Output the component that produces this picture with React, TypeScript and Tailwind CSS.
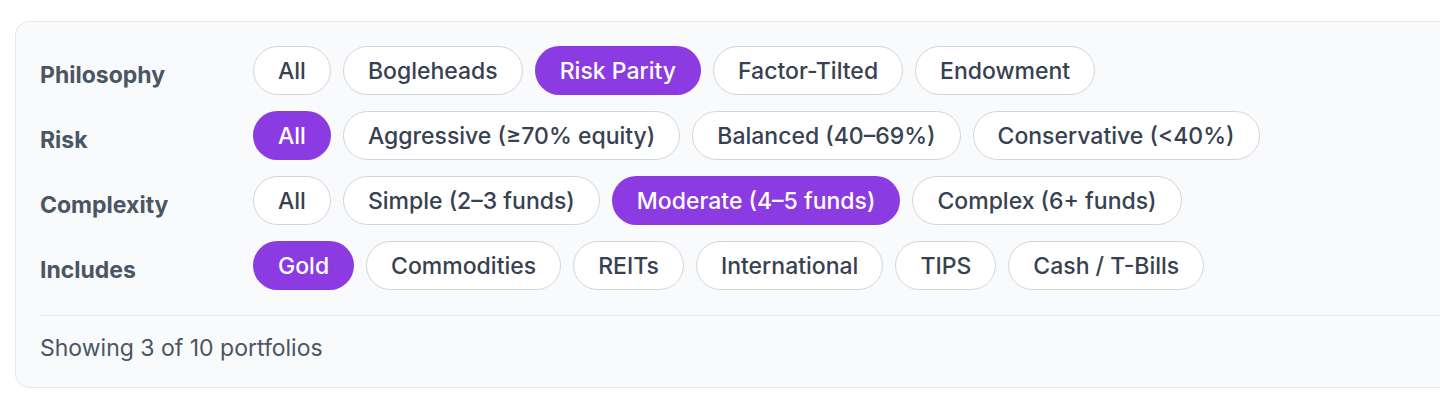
import { useState } from "react";

type Group = {
  key: string;
  label: string;
  options: string[];
};

const GROUPS: Group[] = [
  {
    key: "philosophy",
    label: "Philosophy",
    options: ["All", "Bogleheads", "Risk Parity", "Factor-Tilted", "Endowment"],
  },
  {
    key: "risk",
    label: "Risk",
    options: ["All", "Aggressive (≥70% equity)", "Balanced (40–69%)", "Conservative (<40%)"],
  },
  {
    key: "complexity",
    label: "Complexity",
    options: ["All", "Simple (2–3 funds)", "Moderate (4–5 funds)", "Complex (6+ funds)"],
  },
  {
    key: "includes",
    label: "Includes",
    options: ["Gold", "Commodities", "REITs", "International", "TIPS", "Cash / T-Bills"],
  },
];

function Pill({
  label,
  active,
  onClick,
}: {
  label: string;
  active: boolean;
  onClick: () => void;
}) {
  return (
    <button
      onClick={onClick}
      className={
        active
          ? "h-[49px] px-[25px] rounded-full bg-[#8b3be1] text-white text-[23px] leading-[30px] font-medium whitespace-nowrap"
          : "h-[49px] px-6 rounded-full border border-[#d1d5db] bg-white text-[#374151] text-[23px] leading-[30px] font-medium whitespace-nowrap"
      }
    >
      {label}
    </button>
  );
}

export default function App() {
  const [selected, setSelected] = useState<Record<string, string>>({
    philosophy: "Risk Parity",
    risk: "All",
    complexity: "Moderate (4–5 funds)",
    includes: "Gold",
  });

  return (
    <div
      className="min-h-[402px] bg-white pt-[21px] pl-[15px] overflow-hidden"
      style={{ fontFamily: "Inter, 'Noto Sans', sans-serif" }}
    >
      <div className="w-[1440px] rounded-[14px] border border-[#e5e7eb] bg-[#f9fafb] pl-6 pt-6 pb-6">
        <div className="flex flex-col gap-4">
          {GROUPS.map((g) => (
            <div key={g.key} className="flex items-start">
              <div className="w-[213px] shrink-0 pt-[14px] text-[23px] leading-[30px] font-bold text-[#4b5563]">
                {g.label}
              </div>
              <div className="flex flex-wrap gap-3">
                {g.options.map((opt) => (
                  <Pill
                    key={opt}
                    label={opt}
                    active={selected[g.key] === opt}
                    onClick={() => setSelected((s) => ({ ...s, [g.key]: opt }))}
                  />
                ))}
              </div>
            </div>
          ))}
        </div>

        <div className="mt-[25px] border-t border-[#e5e7eb] pt-[17px]">
          <p className="text-[23px] leading-[30px] text-[#4b5563]">Showing 3 of 10 portfolios</p>
        </div>
      </div>
    </div>
  );
}
